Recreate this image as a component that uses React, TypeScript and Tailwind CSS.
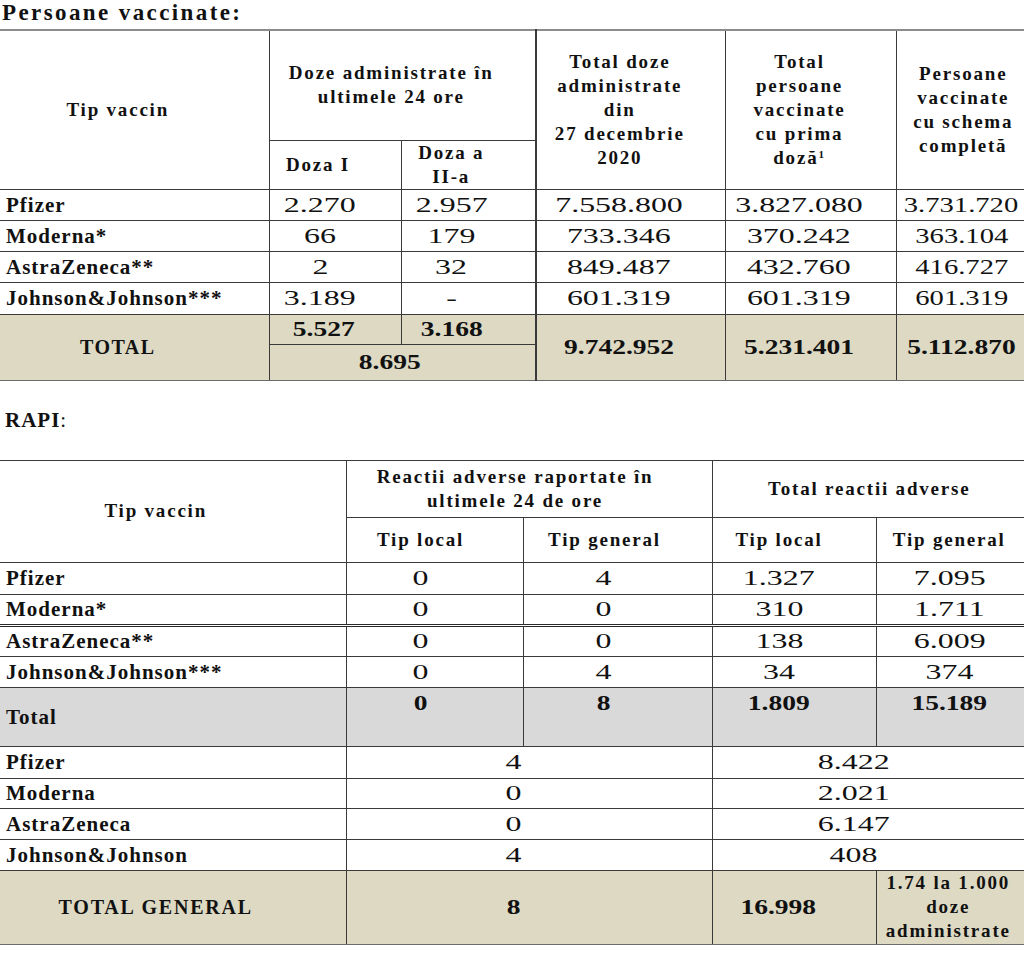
import React from 'react';

const line = 'border border-[#3a3a3a] p-0 text-center align-middle';
const head = `${line} font-bold text-[19px] leading-[24px] tracking-[1.8px]`;
const label = 'border border-[#3a3a3a] border-l-0 p-0 pl-[6px] text-left align-middle font-bold text-[21px] leading-[24px] tracking-[1px]';
const cell = `${line} text-[22px] leading-[24px]`;

function Num({ children, bold, narrow }: { children: React.ReactNode; bold?: boolean; narrow?: boolean }) {
  const scale = bold ? 'scale-x-[1.25] font-bold' : narrow ? 'scale-x-[1.3]' : 'scale-x-[1.45]';
  return <span className={`inline-block leading-[24px] ${scale}`}>{children}</span>;
}

const vaccinated = [
  { name: 'Pfizer', d1: '2.270', d2: '2.957', total: '7.558.800', first: '3.827.080', full: '3.731.720', h: 'h-[31px]' },
  { name: 'Moderna*', d1: '66', d2: '179', total: '733.346', first: '370.242', full: '363.104', h: 'h-[31px]' },
  { name: 'AstraZeneca**', d1: '2', d2: '32', total: '849.487', first: '432.760', full: '416.727', h: 'h-[31px]' },
  { name: 'Johnson&Johnson***', d1: '3.189', d2: '-', total: '601.319', first: '601.319', full: '601.319', h: 'h-[32px]' },
];

const reactions = [
  { name: 'Pfizer', l24: '0', g24: '4', lt: '1.327', gt: '7.095', h: 'h-[32px]', sep: '' },
  { name: 'Moderna*', l24: '0', g24: '0', lt: '310', gt: '1.711', h: 'h-[31px]', sep: 'border-b-[3px] border-b-[#2a2a2a] border-double' },
  { name: 'AstraZeneca**', l24: '0', g24: '0', lt: '138', gt: '6.009', h: 'h-[31px]', sep: '' },
  { name: 'Johnson&Johnson***', l24: '0', g24: '4', lt: '34', gt: '374', h: 'h-[31px]', sep: '' },
];

const general = [
  { name: 'Pfizer', day: '4', total: '8.422', h: 'h-[32px]' },
  { name: 'Moderna', day: '0', total: '2.021', h: 'h-[30px]' },
  { name: 'AstraZeneca', day: '0', total: '6.147', h: 'h-[31px]' },
  { name: 'Johnson&Johnson', day: '4', total: '408', h: 'h-[31px]' },
];

function VaccinatedTable() {
  return (
    <table className="w-[1030px] table-fixed border-t-2 border-t-[#8c8c8c]">
      <colgroup>
        <col className="w-[269px]" />
        <col className="w-[132px]" />
        <col className="w-[135px]" />
        <col className="w-[189px]" />
        <col className="w-[171px]" />
        <col className="w-[134px]" />
      </colgroup>
      <tbody>
        <tr>
          <td rowSpan={2} className={`${head} border-l-0 pr-[33px]`}>Tip vaccin</td>
          <td colSpan={2} className={`${head} h-[110px] pr-[22px]`}>
            Doze administrate în
            <br />
            ultimele 24 ore
          </td>
          <td rowSpan={2} className={`${head} border-l-2 pr-[22px]`}>
            Total doze
            <br />
            administrate
            <br />
            din
            <br />
            27 decembrie
            <br />
            2020
          </td>
          <td rowSpan={2} className={`${head} pr-[22px]`}>
            Total
            <br />
            persoane
            <br />
            vaccinate
            <br />
            cu prima
            <br />
            doză<sup className="text-[11px]">1</sup>
          </td>
          <td rowSpan={2} className={`${head} border-r-0`}>
            Persoane
            <br />
            vaccinate
            <br />
            cu schema
            <br />
            completă
          </td>
        </tr>
        <tr>
          <td className={`${head} h-[49px] pr-[34px]`}>Doza I</td>
          <td className={`${head} pr-[34px]`}>
            Doza a
            <br />
            II-a
          </td>
        </tr>

        {vaccinated.map((r) => (
          <tr key={r.name}>
            <td className={`${label} ${r.h}`}>{r.name}</td>
            <td className={`${cell} pr-[30px]`}><Num>{r.d1}</Num></td>
            <td className={`${cell} pr-[34px]`}><Num>{r.d2}</Num></td>
            <td className={`${cell} border-l-2 pr-[24px]`}><Num>{r.total}</Num></td>
            <td className={`${cell} pr-[24px]`}><Num>{r.first}</Num></td>
            <td className={`${cell} border-r-0 pr-[4px]`}><Num narrow>{r.full}</Num></td>
          </tr>
        ))}

        <tr className="bg-[#ddd9c3]">
          <td rowSpan={2} className={`${line} border-l-0 border-b-[#6a6a6a] pr-[33px] font-bold text-[20px] leading-[24px] tracking-[1.5px]`}>
            TOTAL
          </td>
          <td className={`${cell} h-[30px] pr-[22px]`}><Num bold>5.527</Num></td>
          <td className={`${cell} pr-[34px]`}><Num bold>3.168</Num></td>
          <td rowSpan={2} className={`${cell} border-l-2 border-b-[#6a6a6a] pr-[24px]`}><Num bold>9.742.952</Num></td>
          <td rowSpan={2} className={`${cell} border-b-[#6a6a6a] pr-[24px]`}><Num bold>5.231.401</Num></td>
          <td rowSpan={2} className={`${cell} border-r-0 border-b-[#6a6a6a] pr-[4px]`}><Num bold>5.112.870</Num></td>
        </tr>
        <tr className="bg-[#ddd9c3]">
          <td colSpan={2} className={`${cell} h-[36px] border-b-[#6a6a6a] pr-[26px]`}><Num bold>8.695</Num></td>
        </tr>
      </tbody>
    </table>
  );
}

function ReactionsTable() {
  return (
    <table className="w-[1030px] table-fixed border-t border-t-[#222]">
      <colgroup>
        <col className="w-[346px]" />
        <col className="w-[177px]" />
        <col className="w-[189px]" />
        <col className="w-[164px]" />
        <col className="w-[154px]" />
      </colgroup>
      <tbody>
        <tr>
          <td rowSpan={2} className={`${head} border-l-0 pr-[34px]`}>Tip vaccin</td>
          <td colSpan={2} className={`${head} h-[57px] pr-[28px]`}>
            Reactii adverse raportate în
            <br />
            ultimele 24 de ore
          </td>
          <td colSpan={2} className={`${head} border-r-0 pr-[4px]`}>Total reactii adverse</td>
        </tr>
        <tr>
          <td className={`${head} h-[45px] pr-[28px]`}>Tip local</td>
          <td className={`${head} pr-[26px]`}>Tip general</td>
          <td className={`${head} pr-[30px]`}>Tip local</td>
          <td className={`${head} border-r-0 pr-[8px]`}>Tip general</td>
        </tr>

        {reactions.map((r) => (
          <tr key={r.name}>
            <td className={`${label} ${r.h} ${r.sep}`}>{r.name}</td>
            <td className={`${cell} ${r.sep} pr-[28px]`}><Num>{r.l24}</Num></td>
            <td className={`${cell} ${r.sep} pr-[28px]`}><Num>{r.g24}</Num></td>
            <td className={`${cell} ${r.sep} pr-[30px]`}><Num>{r.lt}</Num></td>
            <td className={`${cell} ${r.sep} border-r-0 pr-[8px]`}><Num>{r.gt}</Num></td>
          </tr>
        ))}

        <tr className="bg-[#d9d9d9]">
          <td className={`${label} h-[59px]`}>Total</td>
          <td className={`${cell} pt-[3px] pr-[28px] align-top`}><Num bold>0</Num></td>
          <td className={`${cell} pt-[3px] pr-[28px] align-top`}><Num bold>8</Num></td>
          <td className={`${cell} pt-[3px] pr-[30px] align-top`}><Num bold>1.809</Num></td>
          <td className={`${cell} border-r-0 pt-[3px] pr-[8px] align-top`}><Num bold>15.189</Num></td>
        </tr>

        {general.map((r) => (
          <tr key={`g-${r.name}`}>
            <td className={`${label} ${r.h}`}>{r.name}</td>
            <td colSpan={2} className={`${cell} pr-[32px]`}><Num>{r.day}</Num></td>
            <td colSpan={2} className={`${cell} border-r-0 pr-[36px]`}><Num>{r.total}</Num></td>
          </tr>
        ))}

        <tr className="bg-[#ddd9c3]">
          <td className={`${line} h-[74px] border-l-0 border-b-[#6a6a6a] pr-[34px] font-bold text-[20px] leading-[24px] tracking-[1.8px]`}>
            TOTAL GENERAL
          </td>
          <td colSpan={2} className={`${cell} border-b-[#6a6a6a] pr-[32px]`}><Num bold>8</Num></td>
          <td className={`${cell} border-b-[#6a6a6a] pr-[32px]`}><Num bold>16.998</Num></td>
          <td className={`${head} border-r-0 border-b-[#6a6a6a] pr-[10px]`}>
            1.74 la 1.000
            <br />
            doze
            <br />
            administrate
          </td>
        </tr>
      </tbody>
    </table>
  );
}

export default function App() {
  return (
    <div className="w-[1024px] h-[958px] overflow-hidden bg-white text-[#111] font-['Liberation_Serif','Times_New_Roman',serif]">
      <div className="h-[29px] pl-[2px] font-bold text-[23px] leading-[26px] tracking-[2.4px]">Persoane vaccinate:</div>

      <VaccinatedTable />

      <div className="h-[79px] pt-[27px] pl-[5px] text-[21px] leading-[24px] tracking-[1px]">
        <span className="font-bold">RAPI</span>:
      </div>

      <ReactionsTable />
    </div>
  );
}
